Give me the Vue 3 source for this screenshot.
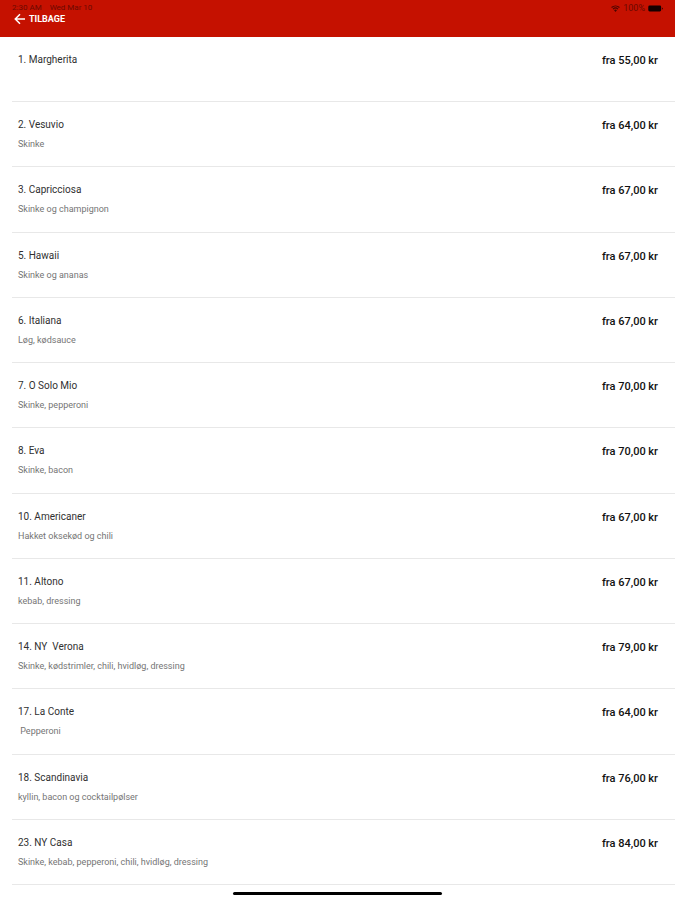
<template>
  <div class="page">
    <header class="header">
      <div class="status-bar">
        <div class="status-left">
          <span>2:30 AM</span>
          <span>Wed Mar 10</span>
        </div>
        <div class="status-right">
          <svg class="wifi" viewBox="0 0 16 12" aria-hidden="true">
            <path d="M1 4.2a10.4 10.4 0 0 1 14 0M3.6 7a6.6 6.6 0 0 1 8.8 0" fill="none" stroke="currentColor" stroke-width="2" />
            <path d="M8 12 5.4 9.2a3.8 3.8 0 0 1 5.2 0z" fill="currentColor" />
          </svg>
          <span>100%</span>
          <svg class="battery" viewBox="0 0 28 12" aria-hidden="true">
            <rect x="0.5" y="0.5" width="24" height="11" rx="2.5" fill="currentColor" />
            <path d="M26 4v4c1-.3 1.6-1 1.6-2S27 4.300 26 4z" fill="currentColor" />
          </svg>
        </div>
      </div>
      <button class="back" type="button">
        <svg class="arrow" viewBox="0 0 24 24" aria-hidden="true">
          <path d="M22 12H3M12 2.500 2.500 12l9.500 9.500" fill="none" stroke="currentColor" stroke-width="3" />
        </svg>
        <span>TILBAGE</span>
      </button>
    </header>

    <ul class="menu">
      <li v-for="item in items" :key="item.name" class="item">
        <div class="info">
          <div class="name">{{ item.name }}</div>
          <div class="description">{{ item.description }}</div>
        </div>
        <div class="price">fra {{ item.price }} kr</div>
      </li>
    </ul>

    <footer class="footer">
      <div class="home-indicator"></div>
    </footer>
  </div>
</template>

<script setup>
import { ref } from 'vue'

const items = ref([
  { name: '1. Margherita', description: '', price: '55,00' },
  { name: '2. Vesuvio', description: 'Skinke', price: '64,00' },
  { name: '3. Capricciosa', description: 'Skinke og champignon', price: '67,00' },
  { name: '5. Hawaii', description: 'Skinke og ananas', price: '67,00' },
  { name: '6. Italiana', description: 'Løg, kødsauce', price: '67,00' },
  { name: '7. O Solo Mio', description: 'Skinke, pepperoni', price: '70,00' },
  { name: '8. Eva', description: 'Skinke, bacon', price: '70,00' },
  { name: '10. Americaner', description: 'Hakket oksekød og chili', price: '67,00' },
  { name: '11. Altono', description: 'kebab, dressing', price: '67,00' },
  { name: '14. NY  Verona', description: 'Skinke, kødstrimler, chili, hvidløg, dressing', price: '79,00' },
  { name: '17. La Conte', description: ' Pepperoni', price: '64,00' },
  { name: '18. Scandinavia', description: 'kyllin, bacon og cocktailpølser', price: '76,00' },
  { name: '23. NY Casa', description: 'Skinke, kebab, pepperoni, chili, hvidløg, dressing', price: '84,00' }
])
</script>

<style>
body {
  background: #fff;
}
</style>

<style scoped>
.page {
  display: flex;
  flex-direction: column;
  min-height: 100vh;
  font-family: Roboto, "Liberation Sans", sans-serif;
  color: #303030;
}

.header {
  box-sizing: border-box;
  height: 37px;
  padding: 3px 12px 0;
  background: #c51100;
}

.status-bar {
  display: flex;
  justify-content: space-between;
  font-size: 9px;
  line-height: 10px;
  color: #6b0900;
}

.status-left {
  display: flex;
  gap: 8px;
  font-size: 8px;
}

.status-right {
  display: flex;
  align-items: center;
  gap: 3px;
}

.wifi {
  width: 9px;
  height: 7px;
  color: #4a0600;
}

.battery {
  width: 15px;
  height: 7px;
  color: #140000;
}

.back {
  display: flex;
  align-items: center;
  gap: 3px;
  padding: 0 2px;
  border: 0;
  background: none;
  font: inherit;
  font-size: 9px;
  font-weight: 700;
  line-height: 12px;
  color: #fff;
  cursor: pointer;
}

.arrow {
  width: 12px;
  height: 12px;
}

.menu {
  flex: 1;
  display: grid;
  grid-auto-rows: 1fr;
  margin: 0;
  padding: 0 0 0 12px;
  list-style: none;
}

.item {
  display: flex;
  justify-content: space-between;
  align-items: flex-start;
  padding: 16px 17px 8px 6px;
  border-bottom: 1px solid #e8e8e8;
}

.name {
  font-size: 10px;
  line-height: 14px;
  white-space: pre-wrap;
}

.description {
  margin-top: 6px;
  min-height: 12px;
  font-size: 9px;
  line-height: 12px;
  color: #757575;
  white-space: pre-wrap;
}

.price {
  padding-top: 1px;
  font-size: 11px;
  font-weight: 500;
  line-height: 14px;
  color: #111;
  white-space: nowrap;
}

.footer {
  display: flex;
  justify-content: center;
  align-items: flex-start;
  height: 15px;
  padding-top: 7px;
  box-sizing: border-box;
}

.home-indicator {
  width: 31%;
  height: 3px;
  border-radius: 2px;
  background: #000;
}
</style>
